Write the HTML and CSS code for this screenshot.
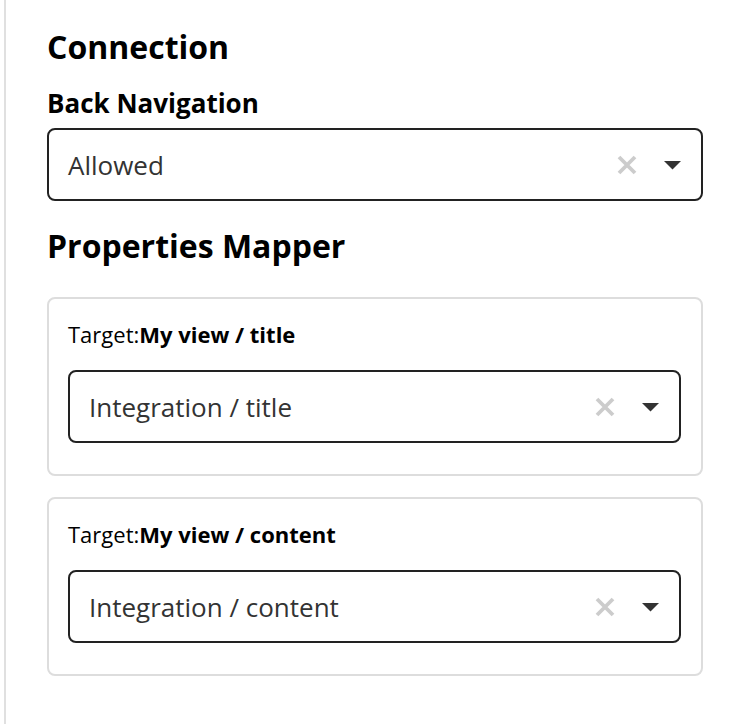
FILE: index.html
```html
<!DOCTYPE html>
<html lang="en">
<head>
<meta charset="utf-8">
<title>Connection</title>
<link rel="stylesheet" href="styles.css">
</head>
<body>
<div class="panel">
  <h2 class="heading">Connection</h2>
  <div class="field-label">Back Navigation</div>
  <div class="select">
    <span class="select-value">Allowed</span>
    <span class="select-clear"><svg width="20" height="20" viewBox="0 0 20 20"><path d="M2 2 L18 18 M18 2 L2 18" stroke="#cccccc" stroke-width="3.8" stroke-linecap="butt"/></svg></span>
    <span class="select-arrow"><svg width="17" height="9" viewBox="0 0 17 9"><path d="M0 0 H17 L8.5 8.5 Z" fill="#333333"/></svg></span>
  </div>

  <h2 class="heading heading-mapper">Properties Mapper</h2>

  <div class="card">
    <div class="target">Target:<b>My view / title</b></div>
    <div class="select">
      <span class="select-value">Integration / title</span>
      <span class="select-clear"><svg width="20" height="20" viewBox="0 0 20 20"><path d="M2 2 L18 18 M18 2 L2 18" stroke="#cccccc" stroke-width="3.8" stroke-linecap="butt"/></svg></span>
      <span class="select-arrow"><svg width="17" height="9" viewBox="0 0 17 9"><path d="M0 0 H17 L8.5 8.5 Z" fill="#333333"/></svg></span>
    </div>
  </div>

  <div class="card">
    <div class="target">Target:<b>My view / content</b></div>
    <div class="select">
      <span class="select-value">Integration / content</span>
      <span class="select-clear"><svg width="20" height="20" viewBox="0 0 20 20"><path d="M2 2 L18 18 M18 2 L2 18" stroke="#cccccc" stroke-width="3.8" stroke-linecap="butt"/></svg></span>
      <span class="select-arrow"><svg width="17" height="9" viewBox="0 0 17 9"><path d="M0 0 H17 L8.5 8.5 Z" fill="#333333"/></svg></span>
    </div>
  </div>
</div>
</body>
</html>
```

FILE: styles.css
```css
html, body {
  margin: 0;
  padding: 0;
  background: #ffffff;
}

body {
  font-family: "Open Sans", "Noto Sans", sans-serif;
  color: #111111;
  padding-left: 4px;
}

.panel {
  border-left: 2px solid #e0e0e0;
  min-height: 724px;
  box-sizing: border-box;
  padding: 27px 31px 0 41px;
  display: flex;
  flex-direction: column;
}

.heading {
  margin: 0;
  font-size: 32px;
  line-height: 40px;
  font-weight: 700;
  color: #000000;
}

.field-label {
  margin-top: 20px;
  font-size: 26px;
  line-height: 32px;
  font-weight: 700;
  color: #000000;
}

.select {
  margin-top: 9px;
  height: 73px;
  box-sizing: border-box;
  border: 2px solid #222222;
  border-radius: 8px;
  display: flex;
  align-items: center;
  padding: 0 20px 0 19px;
  background: #ffffff;
}

.select-value {
  flex: 1;
  font-size: 26px;
  color: #333333;
}

.select-clear {
  display: flex;
  width: 20px;
  height: 20px;
}

.select-arrow {
  display: flex;
  margin-left: 27px;
  margin-top: 1px;
}

.heading-mapper {
  margin-top: 25px;
}

.card {
  margin-top: 31px;
  border: 2px solid #dddddd;
  border-radius: 8px;
  padding: 20px 20px 31px 19px;
}

.card + .card {
  margin-top: 21px;
}

.target {
  font-size: 22px;
  line-height: 30px;
  color: #000000;
}

.target b {
  font-weight: 700;
}

.card .select {
  margin-top: 21px;
}
```
